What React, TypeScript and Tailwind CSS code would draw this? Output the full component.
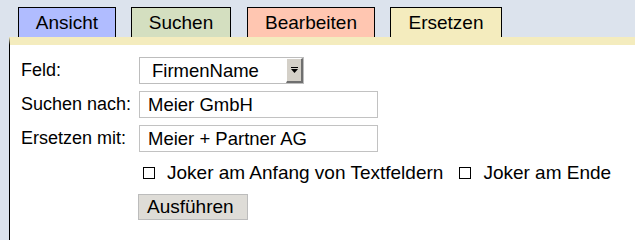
import React from "react"

const tabs = [
  { label: "Ansicht", bg: "bg-[#b0bcff]" },
  { label: "Suchen", bg: "bg-[#d4dfc0]" },
  { label: "Bearbeiten", bg: "bg-[#ffc6b1]" },
  { label: "Ersetzen", bg: "bg-[#f4ecbe]" },
]

function Checkbox({ label }: { label: string }) {
  return (
    <label className="flex items-center">
      <span className="h-3 w-3 border border-black bg-white" />
      <span className="ml-[12px]">{label}</span>
    </label>
  )
}

export default function App() {
  return (
    <div
      className="h-[240px] w-[635px] overflow-hidden bg-[#dce3ed] text-[18px] text-black"
      style={{ fontFamily: '"Liberation Sans", Arial, sans-serif' }}
    >
      {/* tab strip */}
      <div className="flex pl-[18px] pt-[7px] text-[19px]">
        <div className="flex h-[30px] w-[98px] items-center justify-center border border-b-0 border-black bg-[#b0bcff] leading-none">
          Ansicht
        </div>
        <div className="ml-[15px] flex h-[30px] w-[100px] items-center justify-center border border-b-0 border-black bg-[#d4dfc0] leading-none">
          Suchen
        </div>
        <div className="ml-[16px] flex h-[30px] w-[128px] items-center justify-center border border-b-0 border-black bg-[#ffc6b1] leading-none">
          Bearbeiten
        </div>
        <div className="ml-[15px] flex h-[30px] w-[112px] items-center justify-center border border-b-0 border-black bg-[#f4ecbe] leading-none">
          Ersetzen
        </div>
      </div>

      {/* panel */}
      <div className="ml-[9px] h-[203px] border-l border-t-[8px] border-l-black border-t-[#f4ecbe] bg-white pl-[11px] pt-[12px]">
        <div className="flex flex-col gap-[7px]">
          <div className="flex items-center">
            <span className="w-[118px]">Feld:</span>
            <div className="flex h-[27px] w-[165px] items-stretch border border-[#bdbdbd] text-[18.5px]">
              <span className="flex flex-1 items-center pl-[12px]">FirmenName</span>
              <span className="flex w-[17px] items-center justify-center border-b-2 border-l border-r-2 border-t border-b-[#6f6f6f] border-l-white border-r-[#6f6f6f] border-t-white bg-[#d4d0c8]">
                <svg width="7" height="6" viewBox="0 0 7 6">
                  <rect x="0" y="0" width="7" height="1" fill="#000" />
                  <path d="M0 2h7L3.5 6z" fill="#000" />
                </svg>
              </span>
            </div>
          </div>
          <div className="flex items-center">
            <span className="w-[118px]">Suchen nach:</span>
            <div className="flex h-[27px] w-[239px] items-center border border-[#c2c2c2] pl-[8px] text-[18.5px]">
              Meier GmbH
            </div>
          </div>
          <div className="flex items-center">
            <span className="w-[118px]">Ersetzen mit:</span>
            <div className="flex h-[27px] w-[239px] items-center border border-[#c2c2c2] pl-[8px] text-[18.5px]">
              Meier + Partner AG
            </div>
          </div>
        </div>

        <div className="ml-[122px] mt-[10px] flex h-[22px] items-center gap-[16px] text-[19px]">
          <Checkbox label="Joker am Anfang von Textfeldern" />
          <Checkbox label="Joker am Ende" />
        </div>

        <button className="ml-[117px] mt-[10px] flex h-[26px] w-[110px] items-center border border-[#bcbcbc] bg-[#dedcd7] pl-[8px] text-[19px]">
          Ausführen
        </button>
      </div>
    </div>
  )
}
